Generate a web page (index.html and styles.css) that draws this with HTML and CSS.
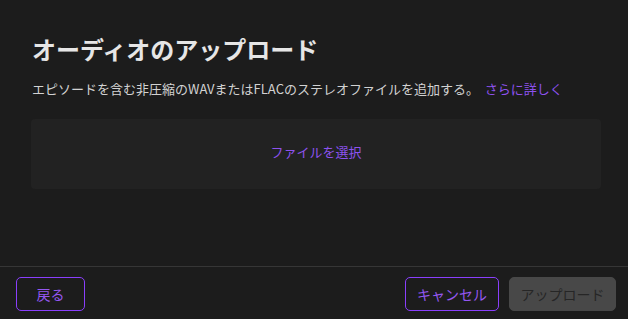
FILE: index.html
```html
<!DOCTYPE html>
<html lang="ja">
<head>
    <meta charset="UTF-8">
    <meta name="viewport" content="width=device-width, initial-scale=1.0">
    <title>オーディオのアップロード</title>
    <link rel="stylesheet" href="styles.css">
</head>
<body>

    <div class="dialog">
        <div class="content">
            <h1 class="title">オーディオのアップロード</h1>
            <p class="desc">エピソードを含む非圧縮のWAVまたはFLACのステレオファイルを追加する。 <a class="link" href="#">さらに詳しく</a></p>
            <div class="dropzone">
                <button class="pick">ファイルを選択</button>
            </div>
        </div>

        <div class="footer">
            <button class="btn btn-outline">戻る</button>
            <div class="right">
                <button class="btn btn-outline">キャンセル</button>
                <button class="btn btn-disabled" disabled>アップロード</button>
            </div>
        </div>
    </div>

</body>
</html>
```

FILE: styles.css
```css
html, body {
    margin: 0;
    padding: 0;
    height: 100vh;
    overflow: hidden;
    background-color: #1c1c1c;
    font-family: "Noto Sans CJK JP", "Noto Sans", sans-serif;
}

.dialog{
    display: flex;
    flex-direction: column;
    height: 319px;
}

.content{
    flex: 1;
    padding: 33px 27px 0 31px;
}

.title{
    margin: 0;
    font-size: 24px;
    line-height: 32px;
    font-weight: 700;
    color: #e6e6e6;
    padding-left: 1px;
}

.desc{
    margin: 14px 0 0 1px;
    font-size: 13px;
    line-height: 20px;
    color: #d2d2d2;
}

.link{
    color: #8d52ee;
    text-decoration: none;
    margin-left: 3px;
}

.dropzone{
    margin-top: 20px;
    height: 70px;
    box-sizing: border-box;
    padding-bottom: 5px;
    background-color: #222222;
    border-radius: 4px;
    display: flex;
    justify-content: center;
    align-items: center;
}

.pick{
    background: none;
    border: none;
    font-family: inherit;
    font-size: 13px;
    color: #8d52ee;
    padding: 0;
}

.footer{
    border-top: 1px solid #363636;
    display: flex;
    justify-content: space-between;
    align-items: center;
    padding: 10px 12px 8px 16px;
}

.right{
    display: flex;
    gap: 10px;
}

.btn{
    height: 34px;
    font-family: inherit;
    font-size: 14px;
    border-radius: 5px;
    padding: 0 11px;
    white-space: nowrap;
}

.btn-outline{
    background: transparent;
    border: 1px solid #8a3ffc;
    color: #9457f0;
    min-width: 69px;
}

.btn-disabled{
    background-color: #484848;
    border: 1px solid #484848;
    color: #262626;
    width: 107px;
    padding: 0;
}
```
